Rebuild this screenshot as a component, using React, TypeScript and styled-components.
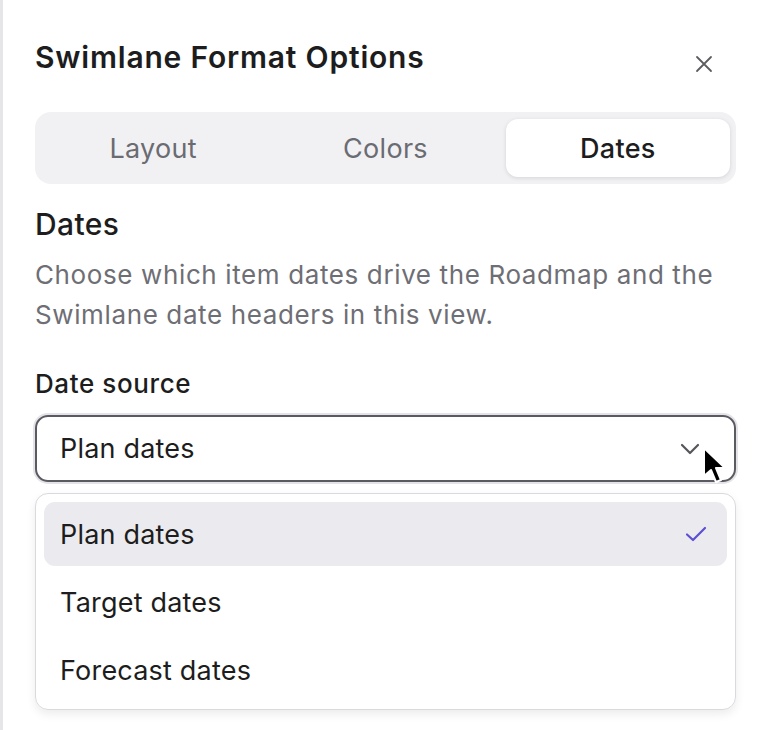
import styled, { createGlobalStyle } from "styled-components";

const GlobalStyle = createGlobalStyle`
  html, body {
    margin: 0;
    padding: 0;
    background: #ffffff;
  }
  body {
    font-family: Inter, "Noto Sans", "Liberation Sans", sans-serif;
    color: #1d1d20;
  }
`;

const Panel = styled.div`
  width: 766px;
  height: 730px;
  box-sizing: border-box;
  border-left: 3px solid #e6e6e9;
  padding: 39px 30px 0 32px;
  position: relative;
`;

const Header = styled.div`
  display: flex;
  align-items: center;
  justify-content: space-between;
  height: 36px;
`;

const Title = styled.h1`
  margin: 0;
  font-size: 30px;
  line-height: 36px;
  font-weight: 600;
  letter-spacing: 0.8px;
  color: #1d1d20;
`;

const CloseButton = styled.button`
  width: 32px;
  height: 32px;
  margin: 14px 16px 0 0;
  border: none;
  background: transparent;
  padding: 0;
  display: flex;
  align-items: center;
  justify-content: center;
  color: #5c5c62;
  cursor: pointer;
`;

const Tabs = styled.div`
  margin-top: 37px;
  height: 72px;
  box-sizing: border-box;
  padding: 7px 6px;
  background: #f1f1f4;
  border-radius: 16px;
  display: grid;
  grid-template-columns: repeat(3, 1fr);
  column-gap: 8px;
`;

const Tab = styled.div<{ $active?: boolean }>`
  display: flex;
  align-items: center;
  justify-content: center;
  border-radius: 12px;
  font-size: 27px;
  letter-spacing: 0.3px;
  font-weight: ${(p) => (p.$active ? 500 : 400)};
  color: ${(p) => (p.$active ? "#1d1d20" : "#6b6b72")};
  background: ${(p) => (p.$active ? "#ffffff" : "transparent")};
  box-shadow: ${(p) => (p.$active ? "0 1px 4px rgba(0, 0, 0, 0.12)" : "none")};
`;

const SectionTitle = styled.h2`
  margin: 22px 0 0;
  font-size: 30px;
  line-height: 36px;
  font-weight: 500;
  letter-spacing: 0.4px;
  color: #1d1d20;
`;

const Description = styled.p`
  margin: 13px 0 0;
  font-size: 26px;
  line-height: 40px;
  color: #6e6e75;
  letter-spacing: 0.62px;
`;

const FieldLabel = styled.div`
  margin-top: 31px;
  font-size: 26px;
  line-height: 36px;
  font-weight: 500;
  letter-spacing: 0.6px;
  color: #1d1d20;
`;

const Select = styled.div`
  margin-top: 13px;
  height: 67px;
  box-sizing: border-box;
  border: 2px solid #5a5a61;
  border-radius: 13px;
  box-shadow: 0 0 0 2px #e4e4e8;
  display: flex;
  align-items: center;
  justify-content: space-between;
  padding: 0 34px 0 23px;
  font-size: 27px;
  letter-spacing: 0.2px;
  color: #1d1d20;
`;

const Menu = styled.div`
  margin-top: 11px;
  height: 217px;
  box-sizing: border-box;
  border: 1px solid #d9d9de;
  border-radius: 13px;
  box-shadow: 0 4px 10px rgba(0, 0, 0, 0.08);
  padding: 8px;
  display: flex;
  flex-direction: column;
`;

const Option = styled.div<{ $selected?: boolean }>`
  height: 64px;
  flex: none;
  margin-bottom: 4px;
  border-radius: 11px;
  display: flex;
  align-items: center;
  justify-content: space-between;
  padding: 0 20px 0 16px;
  font-size: 27px;
  letter-spacing: 0.2px;
  color: #1d1d20;
  background: ${(p) => (p.$selected ? "#ebebef" : "transparent")};
`;

const Cursor = styled.svg`
  position: absolute;
  left: 699px;
  top: 446px;
`;

const options = ["Plan dates", "Target dates", "Forecast dates"];

export default function App() {
  return (
    <>
      <GlobalStyle />
      <Panel>
        <Header>
          <Title>Swimlane Format Options</Title>
          <CloseButton aria-label="Close">
            <svg width="18" height="18" viewBox="0 0 18 18">
              <path d="M2 2L16 16M16 2L2 16" stroke="currentColor" strokeWidth="1.8" strokeLinecap="round" />
            </svg>
          </CloseButton>
        </Header>
        <Tabs>
          <Tab>Layout</Tab>
          <Tab>Colors</Tab>
          <Tab $active>Dates</Tab>
        </Tabs>
        <SectionTitle>Dates</SectionTitle>
        <Description>
          Choose which item dates drive the Roadmap and the Swimlane date headers in this view.
        </Description>
        <FieldLabel>Date source</FieldLabel>
        <Select>
          <span>Plan dates</span>
          <svg width="20" height="12" viewBox="0 0 20 12">
            <path d="M2 2L10 10L18 2" fill="none" stroke="#55555b" strokeWidth="2.2" strokeLinecap="round" strokeLinejoin="round" />
          </svg>
        </Select>
        <Menu>
          {options.map((o, i) => (
            <Option key={o} $selected={i === 0}>
              <span>{o}</span>
              {i === 0 && (
                <svg width="22" height="16" viewBox="0 0 22 16">
                  <path d="M2 8.5L8 14L20 2" fill="none" stroke="#5b4fd4" strokeWidth="2.2" strokeLinecap="round" strokeLinejoin="round" />
                </svg>
              )}
            </Option>
          ))}
        </Menu>
        <Cursor width="26" height="40" viewBox="0 0 26 40">
          <path d="M2 2L2 30L9 24L14 36L19 34L14 22L23 22Z" fill="#000" stroke="#fff" strokeWidth="2" strokeLinejoin="round" />
        </Cursor>
      </Panel>
    </>
  );
}
